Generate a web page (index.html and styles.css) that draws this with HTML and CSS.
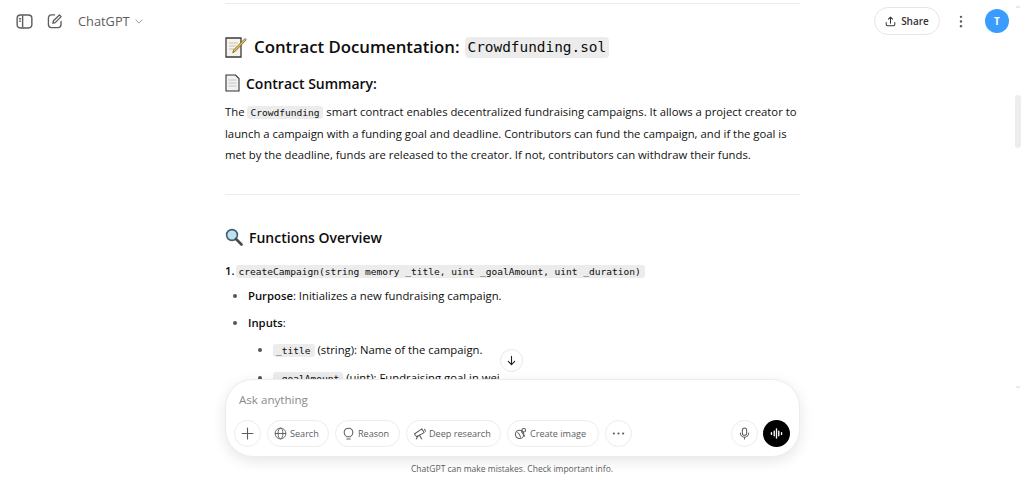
FILE: index.html
```html
<!DOCTYPE html>
<html lang="en">
<head>
<meta charset="utf-8">
<title>ChatGPT</title>
<link rel="stylesheet" href="styles.css">
</head>
<body>
<div class="app">
  <header class="topbar">
    <div class="bar-left">
      <svg class="icon-side" viewBox="0 0 18 18" fill="none" stroke="#5d5d5d" stroke-width="1.5"><rect x="1.2" y="2.2" width="15.6" height="13.6" rx="3.6"/><path d="M7 2.500v13"/><path d="M3.700 6h1M3.700 8.600h1" stroke-linecap="round"/></svg>
      <svg class="icon-edit" viewBox="0 0 18 18" fill="none" stroke="#5d5d5d" stroke-width="1.5" stroke-linecap="round" stroke-linejoin="round"><path d="M8.500 2.200H5a3.400 3.400 0 0 0-3.400 3.400V13A3.400 3.400 0 0 0 5 16.400h7.400a3.400 3.400 0 0 0 3.400-3.400V9.600"/><path d="M14 2.200l1.900 1.900-6.600 6.700-2.700.7.7-2.700z"/></svg>
      <span class="model">ChatGPT</span>
      <svg class="icon-chev" viewBox="0 0 10 6" fill="none" stroke="#8a8a8a" stroke-width="1.1" stroke-linecap="round" stroke-linejoin="round"><path d="M1 1l4 4 4-4"/></svg>
    </div>
    <div class="bar-right">
      <button class="share">
        <svg viewBox="0 0 12 12" fill="none" stroke="#333" stroke-width="1.1" stroke-linecap="round" stroke-linejoin="round"><path d="M6 8V1.400M3.700 3.500L6 1.200l2.300 2.300M1.300 7v2.200c0 .8.6 1.400 1.400 1.400h6.600c.8 0 1.400-.6 1.400-1.400V7"/></svg>
        <span>Share</span>
      </button>
      <svg class="icon-dots" viewBox="0 0 4 14" fill="#5d5d5d"><circle cx="2" cy="2" r="1.3"/><circle cx="2" cy="7" r="1.3"/><circle cx="2" cy="12" r="1.3"/></svg>
      <div class="avatar">T</div>
    </div>
  </header>

  <main class="thread">
    <article class="doc">
      <hr class="rule-top">
      <h1 class="h1">
        <svg class="emoji-memo" viewBox="0 0 22 22"><path d="M1 2h15v19H1z" fill="#f6f3ea" stroke="#3a3a3a" stroke-width="1.3"/><path d="M4 7h9M4 10h7M4 13h5" stroke="#c4c0b5"/><path d="M20 2.500l1.300 1.300-11 11.400-2.600 1.500 1.100-2.900z" fill="#f4c430" stroke="#4a4a4a" stroke-width=".7"/></svg>
        <span>Contract Documentation:</span>
        <code class="code-h1">Crowdfunding.sol</code>
      </h1>
      <h2 class="h2">
        <svg class="emoji-page" viewBox="0 0 15 18"><path d="M1 1h9.500L14 4.500V17H1z" fill="#f1f1f1" stroke="#333" stroke-width="1.100"/><path d="M3.500 6h8M3.500 9h8M3.500 12h8" stroke="#c4c4c4"/></svg>
        <span>Contract Summary:</span>
      </h2>
      <p class="para">The <code class="code">Crowdfunding</code> smart contract enables decentralized fundraising campaigns. It allows a project creator to launch a campaign with a funding goal and deadline. Contributors can fund the campaign, and if the goal is met by the deadline, funds are released to the creator. If not, contributors can withdraw their funds.</p>
      <hr class="rule">
      <h2 class="h2 h2-fn">
        <svg class="emoji-search" viewBox="0 0 18 18"><circle cx="7" cy="7" r="5.400" fill="#bfe0f2" stroke="#3f5d70" stroke-width="1.600"/><path d="M11 11l5.500 5.500" stroke="#4a4a4a" stroke-width="2.600" stroke-linecap="round"/></svg>
        <span>Functions Overview</span>
      </h2>
      <div class="fn"><strong>1.</strong> <code class="code code-fn">createCampaign(string memory _title, uint _goalAmount, uint _duration)</code></div>
      <ul class="list">
        <li><strong>Purpose</strong>: Initializes a new fundraising campaign.</li>
        <li><strong>Inputs</strong>:
          <ul class="sublist">
            <li><code class="code">_title</code> (string): Name of the campaign.</li>
            <li><code class="code">_goalAmount</code> (uint): Fundraising goal in wei.</li>
          </ul>
        </li>
      </ul>
    </article>
    <button class="to-bottom" aria-label="Scroll to bottom">
      <svg viewBox="0 0 12 12" fill="none" stroke="#222" stroke-width="1.200" stroke-linecap="round" stroke-linejoin="round"><path d="M6 1.500v9M2.500 7L6 10.500 9.500 7"/></svg>
    </button>
  </main>

  <div class="scrollbar">
    <span class="arrow-up"></span>
    <span class="thumb"></span>
    <span class="arrow-down"></span>
  </div>

  <section class="composer">
    <div class="prompt">Ask anything</div>
    <div class="tools">
      <button class="round">
        <svg viewBox="0 0 14 14" fill="none" stroke="#5d5d5d" stroke-width="1.200" stroke-linecap="round"><path d="M7 1.200v11.600M1.200 7h11.600"/></svg>
      </button>
      <button class="chip chip-search">
        <svg viewBox="0 0 14 14" fill="none" stroke="#5d5d5d" stroke-width="1"><circle cx="7" cy="7" r="5.800"/><ellipse cx="7" cy="7" rx="2.600" ry="5.800"/><path d="M1.200 7h11.600"/></svg>
        <span>Search</span>
      </button>
      <button class="chip chip-reason">
        <svg viewBox="0 0 14 14" fill="none" stroke="#5d5d5d" stroke-width="1.100" stroke-linecap="round" stroke-linejoin="round"><path d="M5 10.400C3.400 9.400 2.300 7.900 2.300 6a4.700 4.700 0 0 1 9.400 0c0 1.900-1.100 3.400-2.700 4.400z"/><path d="M5.200 12.900h3.600"/></svg>
        <span>Reason</span>
      </button>
      <button class="chip chip-deep">
        <svg viewBox="0 0 14 14" fill="none" stroke="#5d5d5d" stroke-width="1.100" stroke-linecap="round" stroke-linejoin="round"><path d="M1.500 7.500l8-5.500 2.500 4-8 4.500z"/><path d="M5.500 9.500L3.500 13M7 9l2.500 4M12.500 2.500l1 2"/></svg>
        <span>Deep research</span>
      </button>
      <button class="chip chip-image">
        <svg viewBox="0 0 14 14" fill="none" stroke="#5d5d5d" stroke-width="1.100" stroke-linecap="round"><circle cx="6" cy="8" r="4.500"/><circle cx="10.500" cy="3.500" r="2"/><path d="M4 6c1.500 1 2.500 2.500 3 5M8 5l3.500 5"/></svg>
        <span>Create image</span>
      </button>
      <button class="round">
        <svg viewBox="0 0 14 4" fill="#5d5d5d"><circle cx="2" cy="2" r="1.200"/><circle cx="7" cy="2" r="1.200"/><circle cx="12" cy="2" r="1.200"/></svg>
      </button>
      <span class="spacer"></span>
      <button class="round">
        <svg viewBox="0 0 14 14" fill="none" stroke="#5d5d5d" stroke-width="1.100" stroke-linecap="round"><rect x="4.700" y="1" width="4.600" height="8" rx="2.300"/><path d="M2.500 6.500a4.500 4.500 0 0 0 9 0M7 11v2"/></svg>
      </button>
      <button class="voice">
        <svg viewBox="0 0 14 12" fill="none" stroke="#fff" stroke-width="1.500" stroke-linecap="round"><path d="M1.500 5v2M4.500 3.500v5M7 1v10M9.500 3.500v5M12.500 5v2"/></svg>
      </button>
    </div>
  </section>
  <footer class="note">ChatGPT can make mistakes. Check important info.</footer>
</div>
</body>
</html>
```

FILE: styles.css
```css
* { box-sizing: border-box; }
html, body { height: 100%; margin: 0; }
body {
  background: #fff;
  color: #0d0d0d;
  font-family: "Open Sans", "Noto Sans", "Liberation Sans", sans-serif;
  overflow: hidden;
}
button { font-family: inherit; background: #fff; cursor: pointer; padding: 0; }
.app { height: 481px; display: flex; flex-direction: column; position: relative; }

/* top bar */
.topbar {
  position: absolute;
  top: 0; left: 0; right: 0;
  z-index: 2;
  height: 42px;
  display: flex;
  justify-content: space-between;
  align-items: center;
  padding: 0 15px 0 16px;
}
.bar-left { display: flex; align-items: center; }
.icon-side { width: 17px; height: 17px; }
.icon-edit { width: 16px; height: 16px; margin-left: 14px; }
.model { margin-left: 15px; font-size: 12.800px; color: #5d5d5d; line-height: 20px; }
.icon-chev { width: 8px; height: 5px; margin-left: 5px; }
.bar-right { display: flex; align-items: center; }
.share {
  width: 66px; height: 28px;
  display: flex; align-items: center; justify-content: center; gap: 5px;
  border: 1px solid #e5e5e5;
  border-radius: 14px;
  font-size: 10px; font-weight: 600; color: #333;
}
.share svg { width: 11px; height: 11px; }
.icon-dots { width: 4px; height: 13px; margin-left: 19px; }
.avatar {
  width: 24px; height: 24px; margin-left: 22px;
  border-radius: 50%;
  background: #3a9cff; color: #fff;
  display: flex; align-items: center; justify-content: center;
  font-size: 10px; font-weight: 700;
}

/* thread */
.thread { flex: 1; min-height: 0; position: relative; overflow: hidden; }
.doc { width: 575px; margin-left: 225px; }
.rule-top { margin: 3px 0 0; border: 0; border-top: 1px solid #ececec; }
.rule { margin: 29px 0 0; border: 0; border-top: 1px solid #ececec; }
.h1 {
  margin: 29px 0 0;
  display: flex; align-items: center;
  height: 28px;
  font-size: 16.800px; font-weight: 600; line-height: 28px;
}
.emoji-memo { width: 22px; height: 22px; margin-right: 7px; flex: none; }
.code-h1 {
  margin-left: 5px;
  padding: 0 3px;
  height: 21px;
  border-radius: 4px;
  background: #ececec;
  font-family: "DejaVu Sans Mono", "Liberation Mono", monospace;
  font-size: 14.400px; font-weight: 400; line-height: 21px;
}
.h2 {
  margin: 10px 0 0;
  display: flex; align-items: center;
  height: 24px;
  font-size: 14px; font-weight: 600;
}
.emoji-page { width: 15px; height: 18px; margin-right: 6px; flex: none; }
.emoji-search { width: 18px; height: 18px; margin-right: 6px; flex: none; }
.h2-fn { margin-top: 30px; }
.para {
  margin: 6px 0 0;
  font-size: 11.300px; line-height: 21px;
  color: #111;
}
.code {
  padding: 1px 4px 1px 3px;
  border-radius: 3px;
  background: #ececec;
  font-family: "DejaVu Sans Mono", "Liberation Mono", monospace;
  font-size: 9.550px;
}
.code-fn { margin-left: -2px; }
.fn { margin-top: 11px; font-size: 11.300px; line-height: 21px; }
.fn strong { font-weight: 600; }
.list, .sublist { margin: 0; padding: 0; list-style: disc; font-size: 11.300px; line-height: 21px; }
.list { margin-top: 3px; padding-left: 23px; }
.list > li { margin-bottom: 6px; }
.list strong { font-weight: 600; }
.list li::marker { color: #555; }
.sublist { margin-top: 6px; padding-left: 25px; }
.sublist li { margin-bottom: 6px; }
.to-bottom {
  position: absolute;
  left: 500px; top: 349px;
  width: 23px; height: 23px;
  display: flex; align-items: center; justify-content: center;
  border: 1px solid #e8e8e8;
  border-radius: 50%;
}
.to-bottom svg { width: 11px; height: 11px; }
.scrollbar { position: absolute; top: 0; right: 0; height: 392px; width: 15px; }
.arrow-up, .arrow-down, .thumb { position: absolute; display: block; }
.arrow-up {
  top: 5px; left: 6px; width: 0; height: 0;
  border-left: 3px solid transparent; border-right: 3px solid transparent;
  border-bottom: 3px solid #e9e9e9;
}
.arrow-down {
  bottom: 3px; left: 6px; width: 0; height: 0;
  border-left: 3px solid transparent; border-right: 3px solid transparent;
  border-top: 3px solid #e9e9e9;
}
.thumb { top: 95px; left: 6px; width: 6px; height: 53px; border-radius: 3px; background: #ededed; }

/* composer */
.composer {
  width: 575px; height: 78px;
  margin-left: 225px;
  padding: 12px 9px 10px 8px;
  flex: none;
  position: relative;
  background: #fff;
  border: 1px solid #ececec;
  border-radius: 28px;
  box-shadow: 0 4px 14px rgba(0,0,0,.1);
}
.prompt { padding-left: 5px; font-size: 11.600px; line-height: 16px; color: #8a8a8a; }
.tools { margin-top: 12px; display: flex; align-items: center; gap: 6px; }
.round {
  width: 27px; height: 27px; flex: none;
  display: flex; align-items: center; justify-content: center;
  border: 1px solid #ececec; border-radius: 50%;
}
.round svg { width: 13px; height: 13px; }
.chip {
  height: 27px; flex: none;
  display: flex; align-items: center; gap: 3px;
  padding: 0 0 0 6px;
  border: 1px solid #ececec; border-radius: 14px;
  font-size: 9.100px; font-weight: 500; color: #5d5d5d;
}
.chip svg { width: 13px; height: 13px; }
.chip-search { width: 62px; }
.chip-reason { width: 65px; }
.chip-deep { width: 95px; }
.chip-image { width: 92px; }
.spacer { flex: 1; }
.voice {
  width: 27px; height: 27px; flex: none;
  margin-left: -1px;
  display: flex; align-items: center; justify-content: center;
  background: #000; border: 0; border-radius: 50%;
}
.voice svg { width: 13px; height: 11px; }
.note {
  flex: none;
  height: 24px;
  text-align: center;
  font-size: 8.500px; line-height: 24px; color: #5d5d5d;
}
```
